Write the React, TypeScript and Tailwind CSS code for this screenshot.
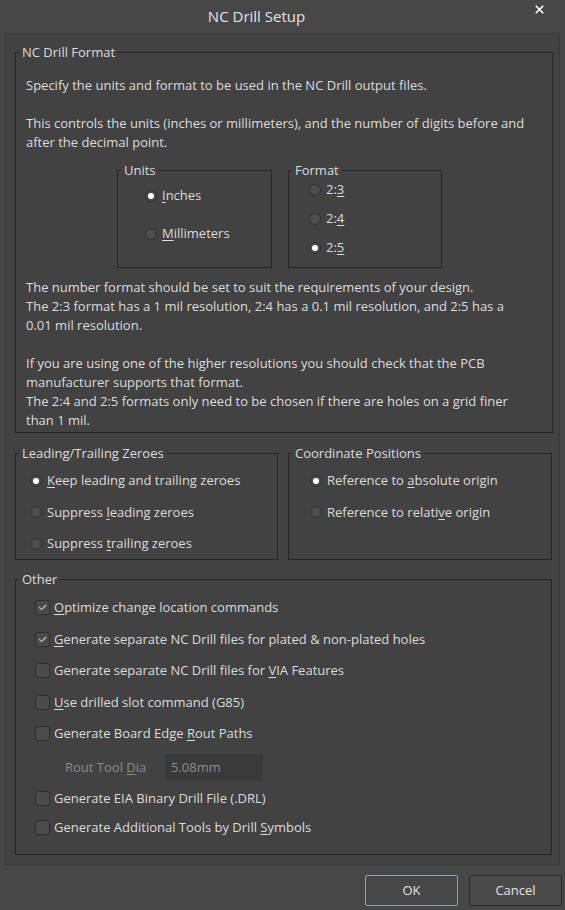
import { X } from 'lucide-react';
import type { ReactNode } from 'react';

const font = { fontFamily: '"Open Sans", "Noto Sans", sans-serif' };

function Radio({ checked }: { checked?: boolean }) {
  return (
    <span className="flex h-[12px] w-[12px] shrink-0 items-center justify-center rounded-full border border-[#2f2f2f] bg-[#4d4d4d]">
      {checked && <span className="h-[6px] w-[6px] rounded-full bg-white" />}
    </span>
  );
}

function Check({ checked }: { checked?: boolean }) {
  return (
    <span className="flex h-[15px] w-[15px] shrink-0 items-center justify-center rounded-[3px] border border-[#2c2c2c] bg-[#4b4b4b]">
      {checked && (
        <svg width="9" height="7" viewBox="0 0 9 7" fill="none">
          <path d="M1 3.2 L3.6 5.6 L8 1" stroke="#c8c8c8" strokeWidth="1.1" />
        </svg>
      )}
    </span>
  );
}

// group box: fieldset carries the border + legend, inner div carries the padding
function Group({
  title,
  className,
  inner,
  children,
}: {
  title: string;
  className?: string;
  inner?: string;
  children: ReactNode;
}) {
  return (
    <fieldset className={`border border-[#262626] ${className ?? ''}`}>
      <legend className="ml-[3px] px-[3px] text-[13px] leading-[18px] text-[#dcdcdc]">{title}</legend>
      <div className={inner}>{children}</div>
    </fieldset>
  );
}

// label with one underlined access key
function Lbl({ pre = '', u, post = '' }: { pre?: string; u: string; post?: string }) {
  return (
    <span className="whitespace-nowrap">
      {pre}
      <span className="underline underline-offset-[2px]">{u}</span>
      {post}
    </span>
  );
}

function RadioRow({ checked, children }: { checked?: boolean; children: ReactNode }) {
  return (
    <div className="flex h-[19px] items-center gap-[5px]">
      <Radio checked={checked} />
      <span>{children}</span>
    </div>
  );
}

function CheckRow({ checked, className, children }: { checked?: boolean; className?: string; children: ReactNode }) {
  return (
    <div className={`flex h-[19px] items-center gap-[4px] ${className ?? ''}`}>
      <Check checked={checked} />
      <span>{children}</span>
    </div>
  );
}

export default function App() {
  return (
    <div
      style={font}
      className="h-[910px] w-[565px] overflow-hidden bg-[#474747] text-[13px] leading-[19px] text-[#dcdcdc]"
    >
      {/* title bar */}
      <div className="relative flex h-[33px] items-center justify-center pr-[52px]">
        <span className="text-[15px] text-[#e4e4e4]">NC Drill Setup</span>
        <X className="absolute right-[19px] top-[3px] h-[13px] w-[13px] text-white" strokeWidth={3.2} />
      </div>

      <div className="mx-[5px] h-[832px] border border-[#3a3a3a] bg-[#424242] pl-[9px] pr-[6px] pt-[9px]">
        <Group title="NC Drill Format" className="h-[390px]" inner="px-[10px] pt-[15px]">
          <p>Specify the units and format to be used in the NC Drill output files.</p>
          <p className="mt-[19px]">
            This controls the units (inches or millimeters), and the number of digits before and
            <br />
            after the decimal point.
          </p>

          <div className="ml-[91px] mt-[9px] flex gap-[16px]">
            <Group title="Units" className="h-[107px] w-[155px]" inner="pl-[27px] pt-[7px]">
              <div className="flex flex-col gap-[19px]">
                <RadioRow checked>
                  <Lbl u="I" post="nches" />
                </RadioRow>
                <RadioRow>
                  <Lbl u="M" post="illimeters" />
                </RadioRow>
              </div>
            </Group>
            <Group title="Format" className="h-[107px] w-[154px]" inner="pl-[20px] pt-[1px]">
              <div className="flex flex-col gap-[10px]">
                <RadioRow>
                  <Lbl pre="2:" u="3" />
                </RadioRow>
                <RadioRow>
                  <Lbl pre="2:" u="4" />
                </RadioRow>
                <RadioRow checked>
                  <Lbl pre="2:" u="5" />
                </RadioRow>
              </div>
            </Group>
          </div>

          <p className="mt-[10px]">
            The number format should be set to suit the requirements of your design.
            <br />
            The 2:3 format has a 1 mil resolution, 2:4 has a 0.1 mil resolution, and 2:5 has a
            <br />
            0.01 mil resolution.
          </p>
          <p className="mt-[19px]">
            If you are using one of the higher resolutions you should check that the PCB
            <br />
            manufacturer supports that format.
            <br />
            The 2:4 and 2:5 formats only need to be chosen if there are holes on a grid finer
            <br />
            than 1 mil.
          </p>
        </Group>

        <div className="mt-[11px] flex gap-[10px] pr-[1px]">
          <Group title="Leading/Trailing Zeroes" className="h-[116px] w-[263px]" inner="pl-[14px] pt-[9px]">
            <div className="flex flex-col gap-[12.5px]">
              <RadioRow checked>
                <Lbl u="K" post="eep leading and trailing zeroes" />
              </RadioRow>
              <RadioRow>
                <Lbl pre="Suppress " u="l" post="eading zeroes" />
              </RadioRow>
              <RadioRow>
                <Lbl pre="Suppress " u="t" post="railing zeroes" />
              </RadioRow>
            </div>
          </Group>
          <Group title="Coordinate Positions" className="h-[116px] flex-1" inner="pl-[21px] pt-[9px]">
            <div className="flex flex-col gap-[12.5px]">
              <RadioRow checked>
                <Lbl pre="Reference to " u="a" post="bsolute origin" />
              </RadioRow>
              <RadioRow>
                <Lbl pre="Reference to relati" u="v" post="e origin" />
              </RadioRow>
            </div>
          </Group>
        </div>

        <Group title="Other" className="mr-[1px] mt-[10px] h-[285px]" inner="pl-[19px] pt-[10px]">
          <div className="flex flex-col gap-[12.5px]">
            <CheckRow checked>
              <Lbl u="O" post="ptimize change location commands" />
            </CheckRow>
            <CheckRow checked>
              <Lbl u="G" post="enerate separate NC Drill files for plated & non-plated holes" />
            </CheckRow>
            <CheckRow>
              <Lbl pre="Generate separate NC Drill files for " u="V" post="IA Features" />
            </CheckRow>
            <CheckRow>
              <Lbl u="U" post="se drilled slot command (G85)" />
            </CheckRow>
            <CheckRow>
              <Lbl pre="Generate Board Edge " u="R" post="out Paths" />
            </CheckRow>
            <div className="-mb-[4px] -mt-[2px] flex items-center">
              <span className="ml-[30px] w-[100px] text-[#8a8a8a]">
                <Lbl pre="Rout Tool " u="D" post="ia" />
              </span>
              <div className="flex h-[27px] w-[98px] items-center rounded-[3px] bg-[#3a3a3a] px-[6px] text-[#8c8c8c]">
                5.08mm
              </div>
            </div>
            <CheckRow>
              <Lbl pre="Generate EIA Binary Drill File (.DRL)" u="" />
            </CheckRow>
            <CheckRow className="-mt-[3px]">
              <Lbl pre="Generate Additional Tools by Drill " u="S" post="ymbols" />
            </CheckRow>
          </div>
        </Group>
      </div>

      {/* buttons */}
      <div className="mr-[3px] mt-[10px] flex justify-end gap-[11px]">
        <button className="h-[31px] w-[93px] rounded-[2px] border border-[#8da3bb] bg-[#474747] text-[#e4e4e4]">
          OK
        </button>
        <button className="h-[31px] w-[93px] rounded-[2px] border border-[#2c2c2c] bg-[#4a4a4a] text-[#e4e4e4]">
          Cancel
        </button>
      </div>
    </div>
  );
}
